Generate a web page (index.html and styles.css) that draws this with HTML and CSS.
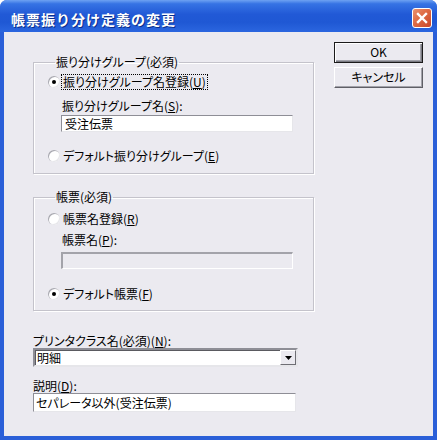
FILE: index.html
```html
<!DOCTYPE html>
<html lang="ja">
<head>
<meta charset="utf-8">
<title>帳票振り分け定義の変更</title>
<link rel="stylesheet" href="styles.css">
</head>
<body>
<div class="window">
  <div class="titlebar">
    <span class="title">帳票振り分け定義の変更</span>
    <span class="close">
      <svg width="12" height="12" viewBox="0 0 12 12"><path d="M2 2 L10 10 M10 2 L2 10" stroke="#fff" stroke-width="2.4" stroke-linecap="square"/></svg>
    </span>
  </div>
  <div class="client">
    <div class="main">
      <fieldset class="group g1">
        <legend>振り分けグループ(必須)</legend>
        <div class="opt r1"><span class="radio on"></span><span class="lbl focus">振り分けグループ名登録(<u>U</u>)</span></div>
        <div class="flabel fs">振り分けグループ名(<u>S</u>):</div>
        <div class="edit e1">受注伝票</div>
        <div class="opt r2"><span class="radio"></span><span class="lbl">デフォルト振り分けグループ(<u>E</u>)</span></div>
      </fieldset>
      <fieldset class="group g2">
        <legend>帳票(必須)</legend>
        <div class="opt r3"><span class="radio"></span><span class="lbl">帳票名登録(<u>R</u>)</span></div>
        <div class="flabel fp">帳票名(<u>P</u>):</div>
        <div class="edit disabled"></div>
        <div class="opt r4"><span class="radio on"></span><span class="lbl">デフォルト帳票(<u>F</u>)</span></div>
      </fieldset>
      <div class="plabel ln">プリンタクラス名(必須)(<u>N</u>):</div>
      <div class="combo">
        <span class="combo-text">明細</span>
        <span class="drop"><svg width="7" height="4" viewBox="0 0 7 4"><path d="M0 0 H7 L3.5 4 Z" fill="#000"/></svg></span>
      </div>
      <div class="plabel ld">説明(<u>D</u>):</div>
      <div class="edit e3">セパレータ以外(受注伝票)</div>
    </div>
    <div class="buttons">
      <div class="btn default">OK</div>
      <div class="btn">キャンセル</div>
    </div>
  </div>
</div>
</body>
</html>
```
FILE: styles.css
```css
body {
  margin: 0;
  background: #ffffff;
  font-family: "Noto Sans CJK JP", "Liberation Sans", sans-serif;
  font-size: 12px;
  line-height: 14px;
  color: #000;
  font-feature-settings: "palt" 1;
}

.window {
  width: 437px;
  height: 440px;
  box-sizing: border-box;
  background: #2a5fd8;
  border-radius: 7px 7px 0 0;
  display: flex;
  flex-direction: column;
}

.titlebar {
  height: 32px;
  box-sizing: border-box;
  border-radius: 7px 7px 0 0;
  background: linear-gradient(#6ea2f2 0%, #3673e4 12%, #2159d6 45%, #1f58d4 70%, #2b66df 100%);
  display: flex;
  align-items: flex-start;
  padding: 11px 5px 0 11px;
}

.title {
  color: #fff;
  font-weight: bold;
  font-size: 14px;
  line-height: 16px;
  letter-spacing: 1px;
  text-shadow: 1px 1px 0 #0a2e8c;
  font-feature-settings: normal;
}

.close {
  margin-left: auto;
  margin-top: -3px;
  width: 20px;
  height: 20px;
  box-sizing: border-box;
  border: 1px solid #fff;
  border-radius: 3px;
  background: linear-gradient(135deg, #ea9270 0%, #de6a44 45%, #c8472a 100%);
  display: flex;
  align-items: center;
  justify-content: center;
}

.client {
  flex: 1;
  margin: 0 4px 4px 4px;
  background: #ebeaf0;
  display: flex;
  padding: 10px 10px 0 29px;
}

.main {
  width: 281px;
  display: flex;
  flex-direction: column;
  align-items: flex-start;
  margin-top: 13px;
}

.group {
  margin: 0;
  width: 281px;
  box-sizing: border-box;
  border: 1px solid #c4c3cb;
  box-shadow: inset 1px 1px 0 #fff, 1px 1px 0 #fff;
  padding: 0 0 0 14px;
  display: flex;
  flex-direction: column;
  align-items: flex-start;
}

.group legend {
  padding: 0 1px;
  margin-left: 7px;
  line-height: 14px;
}

.g1 { padding-top: 6px; padding-bottom: 10px; }
.g2 { margin-top: 16px; padding-top: 8px; padding-bottom: 9px; }

.opt {
  display: flex;
  align-items: center;
  height: 14px;
}

.radio {
  width: 12px;
  height: 12px;
  border-radius: 50%;
  background: #fff;
  box-shadow: inset 1px 1px 0 #a8a8b0, inset -1px -1px 0 #e6e6ea;
  position: relative;
  flex: none;
}

.radio.on::after {
  content: "";
  position: absolute;
  left: 4px;
  top: 4px;
  width: 4px;
  height: 4px;
  border-radius: 50%;
  background: #000;
}

.lbl {
  margin-left: 2px;
  padding: 0 1px;
}

.lbl.focus {
  outline: 1px dotted #000;
}

.flabel {
  margin-left: 14px;
}

.fs { margin-top: 10px; }
.fp { margin-top: 7px; }
.r2 { margin-top: 17px; }
.r4 { margin-top: 18px; }

.edit {
  box-sizing: border-box;
  height: 17px;
  width: 232px;
  background: #fff;
  border: 1px solid;
  border-color: #8e8e96 #e6e6ea #e6e6ea #8e8e96;
  padding: 0 3px;
  line-height: 15px;
  white-space: nowrap;
}

.e1 {
  margin-left: 13px;
  margin-top: 2px;
}

.edit.disabled {
  margin-left: 13px;
  margin-top: 5px;
  background: #ebeaf0;
  border-width: 2px 1px 1px 2px;
  border-color: #a3a3aa #ffffff #ffffff #a3a3aa;
}

.plabel {
  margin-left: 0;
}

.ln { margin-top: 23px; }
.ld { margin-top: 12px; }

.combo {
  box-sizing: border-box;
  width: 265px;
  height: 19px;
  background: #fff;
  border: 2px solid;
  border-color: #8e8e96 #e6e6ea #e6e6ea #8e8e96;
  box-shadow: inset 1px 1px 0 #5a5a60;
  display: flex;
  align-items: center;
}

.combo-text {
  padding-left: 2px;
  line-height: 15px;
}

.drop {
  margin-left: auto;
  width: 16px;
  height: 15px;
  box-sizing: border-box;
  background: #ebeaf0;
  border: 1px solid;
  border-color: #ffffff #6e6e74 #6e6e74 #ffffff;
  display: flex;
  align-items: center;
  justify-content: center;
}

.e3 {
  width: 263px;
  height: 19px;
  line-height: 17px;
  padding: 0 2px;
}

.buttons {
  margin-left: auto;
  width: 89px;
  display: flex;
  flex-direction: column;
  gap: 4px;
}

.btn {
  box-sizing: border-box;
  height: 21px;
  border: 1px solid;
  border-color: #ffffff #5f5f66 #5f5f66 #ffffff;
  box-shadow: inset -1px -1px 0 #a2a2aa;
  background: #ebeaf0;
  text-align: center;
  line-height: 18px;
}

.btn.default {
  border: 1px solid #1a1a1a;
  box-shadow: inset 1px 1px 0 #fff, inset -1px -1px 0 #7a7a82, inset -2px -2px 0 #a2a2aa;
}
```
